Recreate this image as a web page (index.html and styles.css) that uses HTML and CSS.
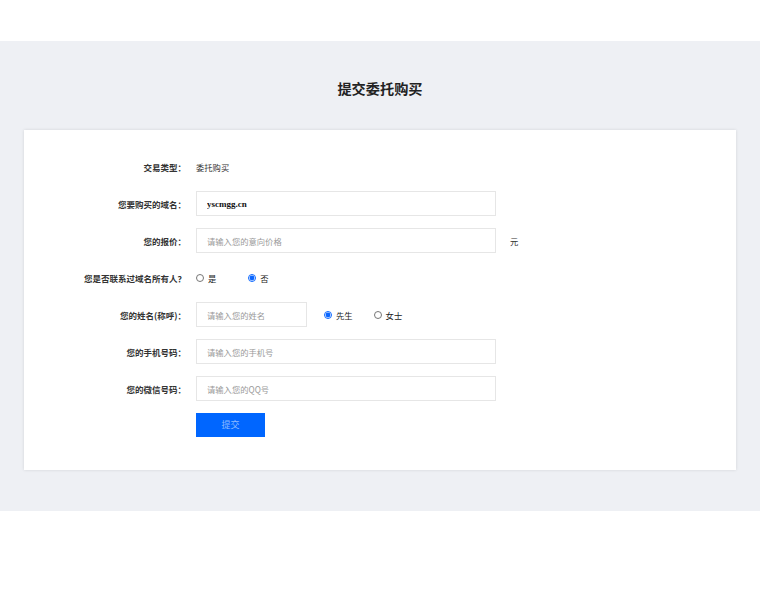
FILE: index.html
```html
<!DOCTYPE html>
<html lang="zh-CN">
<head>
<meta charset="utf-8">
<title>提交委托购买</title>
<link rel="stylesheet" href="styles.css">
</head>
<body>
<div class="topbar"></div>
<section class="main">
  <h1 class="title">提交委托购买</h1>
  <form class="card">
    <div class="row">
      <label class="lbl">交易类型：</label>
      <div class="val"><span class="plain">委托购买</span></div>
    </div>
    <div class="row">
      <label class="lbl">您要购买的域名：</label>
      <div class="val"><input class="ipt ipt-domain" type="text" value="yscmgg.cn"></div>
    </div>
    <div class="row">
      <label class="lbl">您的报价：</label>
      <div class="val"><input class="ipt" type="text" placeholder="请输入您的意向价格"><span class="unit">元</span></div>
    </div>
    <div class="row">
      <label class="lbl">您是否联系过域名所有人？</label>
      <div class="val radios">
        <label class="opt"><input type="radio" name="contact">是</label>
        <label class="opt"><input type="radio" name="contact" checked>否</label>
      </div>
    </div>
    <div class="row">
      <label class="lbl">您的姓名(称呼)：</label>
      <div class="val">
        <input class="ipt ipt-short" type="text" placeholder="请输入您的姓名">
        <div class="radios radios-sex">
          <label class="opt"><input type="radio" name="sex" checked>先生</label>
          <label class="opt"><input type="radio" name="sex">女士</label>
        </div>
      </div>
    </div>
    <div class="row">
      <label class="lbl">您的手机号码：</label>
      <div class="val"><input class="ipt" type="text" placeholder="请输入您的手机号"></div>
    </div>
    <div class="row">
      <label class="lbl">您的微信号码：</label>
      <div class="val"><input class="ipt" type="text" placeholder="请输入您的QQ号"></div>
    </div>
    <div class="row row-submit">
      <span class="lbl"></span>
      <div class="val"><button class="btn" type="button">提交</button></div>
    </div>
  </form>
</section>
</body>
</html>
```

FILE: styles.css
```css
* { box-sizing: border-box; }
html, body { margin: 0; padding: 0; background: #fff; }
body {
  font-family: "Noto Sans CJK SC", "Noto Sans", sans-serif;
  color: #333;
  font-size: 8.3px;
}
.topbar { height: 41px; background: #fff; }
.main {
  background: #eef0f4;
  padding: 37px 24px 41px;
  height: 470px;
}
.title {
  margin: 0 0 32px;
  text-align: center;
  font-size: 14.2px;
  font-weight: 700;
  line-height: 20px;
  color: #222;
}
.card {
  background: #fff;
  box-shadow: 0 0 3px rgba(0,0,0,0.12);
  padding: 24px 0 33px;
  display: flex;
  flex-direction: column;
  gap: 12px;
}
.row {
  display: flex;
  align-items: center;
  min-height: 25px;
}
.row-submit { margin-top: -1px; }
.lbl {
  width: 162px;
  flex: none;
  text-align: right;
  font-weight: 700;
  font-size: 8.5px;
  color: #333;
  white-space: nowrap;
}
.val {
  margin-left: 10px;
  display: flex;
  align-items: center;
}
.plain { color: #333; }
.ipt {
  width: 300px;
  height: 25px;
  border: 1px solid #e6e6e6;
  border-radius: 0;
  padding: 0 10px;
  font-family: "Noto Sans CJK SC", sans-serif;
  font-size: 8.3px;
  color: #222;
  outline: none;
  background: #fff;
}
.ipt::placeholder { color: #9a9a9a; }
.ipt-domain {
  font-family: "Liberation Serif", serif;
  font-weight: 700;
  font-size: 9px;
  color: #111;
}
.ipt-short { width: 111px; }
.unit { margin-left: 14px; }
.radios { display: flex; align-items: center; }
.opt {
  display: flex;
  align-items: center;
  margin-right: 32px;
  color: #222;
}
.opt input {
  width: 8px;
  height: 8px;
  margin: 0 4px 0 0;
  accent-color: #0a66ff;
}
.radios-sex { margin-left: 17px; }
.radios-sex .opt { margin-right: 21px; }
.btn {
  width: 69px;
  height: 24px;
  border: none;
  background: #0066ff;
  color: #8fbaff;
  font-family: "Noto Sans CJK SC", sans-serif;
  font-size: 9px;
  cursor: pointer;
  padding: 0;
}
```
